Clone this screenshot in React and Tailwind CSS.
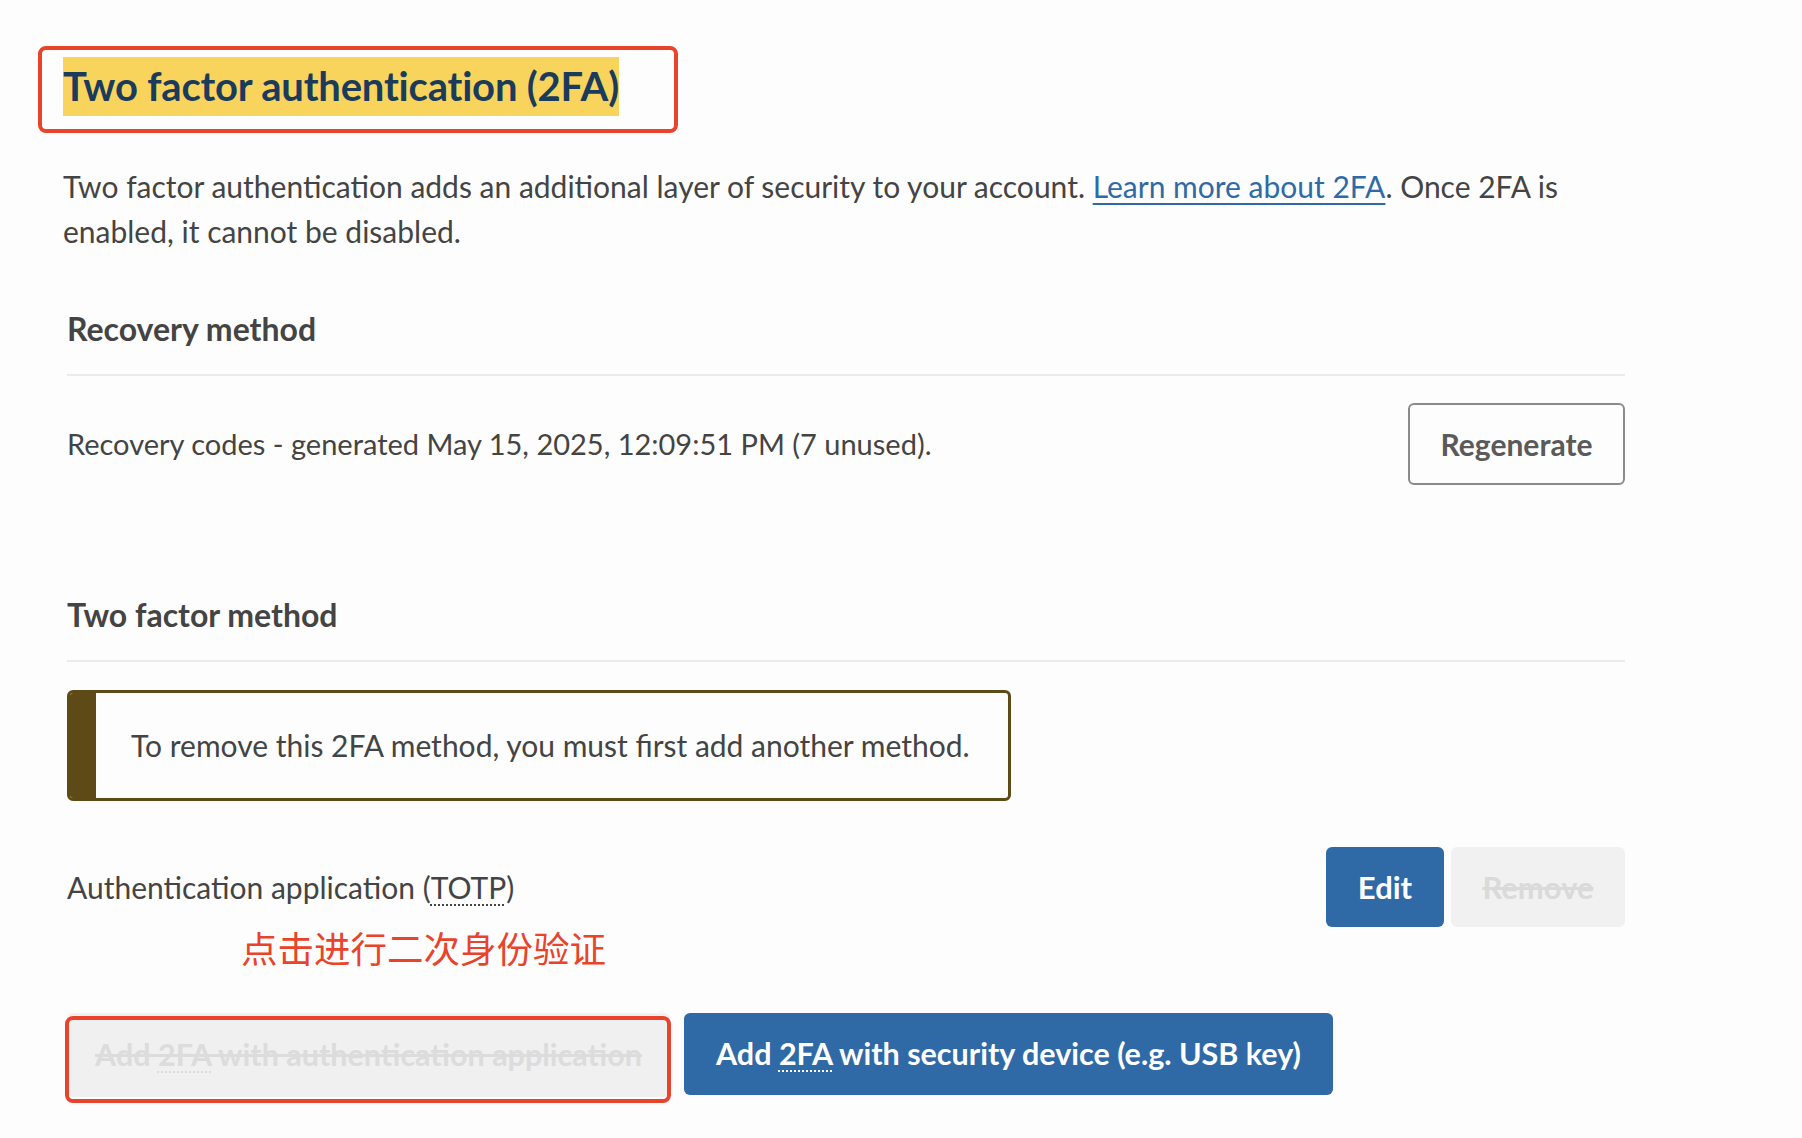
import React from 'react';

const font = { fontFamily: 'Lato, "Noto Sans CJK SC", sans-serif' };

const SectionHeading = ({ children }) => (
    <h3 className="text-[32px] leading-[40px] font-bold text-[#444] pb-[25px] border-b-2 border-[#ebebeb]">
        {children}
    </h3>
);

const Abbr = ({ title, children }) => (
    <abbr title={title} className="underline decoration-dotted decoration-2 underline-offset-[5px]">
        {children}
    </abbr>
);

export default function App() {
    return (
        <div className="min-h-screen bg-[#fdfdfd] pl-[38px] pt-[46px] text-[#444]" style={font}>
            <div className="w-[1587px]">
                {/* Title, annotated with a red box */}
                <div className="inline-block border-4 border-[#e9432b] rounded-lg pl-[21px] pr-[55px] pt-[7px] pb-[13px]">
                    <h2 className="bg-[#f8d45c] text-[#1b3b5c] text-[40px] leading-[59px] font-bold tracking-[-0.2px]">
                        Two factor authentication (2FA)
                    </h2>
                </div>

                <p className="ml-[25px] mt-[31px] text-[30px] leading-[45px]">
                    Two factor authentication adds an additional layer of security to your account.{' '}
                    <a href="#" className="text-[#2f6aa7] underline decoration-2 underline-offset-[5px]">Learn more about 2FA</a>. Once 2FA is
                    <br />
                    enabled, it cannot be disabled.
                </p>

                <div className="ml-[29px] mt-[55px] w-[1558px]">
                    <SectionHeading>Recovery method</SectionHeading>

                    <div className="mt-[27px] flex items-center justify-between">
                        <span className="text-[29px] leading-[40px]">
                            Recovery codes - generated May 15, 2025, 12:09:51 PM (7 unused).
                        </span>
                        <button className="w-[217px] h-[82px] border-2 border-[#8b8b8b] rounded-md text-[30px] font-bold text-[#5a5a5a]">
                            Regenerate
                        </button>
                    </div>

                    <div className="mt-[110px]">
                        <SectionHeading>Two factor method</SectionHeading>
                    </div>

                    <div className="mt-[28px] w-[944px] h-[111px] flex border-[3px] border-[#5e4a16] rounded-md overflow-hidden">
                        <div className="w-[26px] bg-[#5e4a16]" />
                        <div className="flex items-center pl-[35px] text-[30px]">
                            To remove this 2FA method, you must first add another method.
                        </div>
                    </div>

                    <div className="mt-[46px] flex items-center justify-between">
                        <span className="text-[30px] leading-[40px]">
                            Authentication application (<Abbr title="Time-based One-Time Password">TOTP</Abbr>)
                        </span>
                        <div className="flex gap-[7px]">
                            <button className="w-[118px] h-[80px] rounded-md bg-[#2f6aa7] text-white text-[31px] font-bold">
                                Edit
                            </button>
                            <button disabled className="w-[174px] h-[80px] rounded-md bg-[#f1f1f1] text-[#dadada] text-[31px] font-bold line-through">
                                Remove
                            </button>
                        </div>
                    </div>

                    <p className="ml-[174px] text-[36.5px] leading-[44px] text-[#e9432b]">点击进行二次身份验证</p>

                    <div className="mt-[42px] flex items-start gap-[14px]">
                        <div className="relative">
                            <button disabled className="w-[603px] h-[84px] rounded-md bg-[#f0f0f0] text-[#dcdcdc] text-[30.5px] font-bold line-through">
                                Add <Abbr title="Two factor authentication">2FA</Abbr> with authentication application
                            </button>
                            <div className="absolute left-[-2px] top-[3px] w-[606px] h-[87px] border-4 border-[#e9432b] rounded-lg pointer-events-none" />
                        </div>
                        <button className="w-[649px] h-[82px] rounded-md bg-[#2f6aa7] text-white text-[30.5px] font-bold">
                            Add <Abbr title="Two factor authentication">2FA</Abbr> with security device (e.g. USB key)
                        </button>
                    </div>
                </div>
            </div>
        </div>
    );
}
